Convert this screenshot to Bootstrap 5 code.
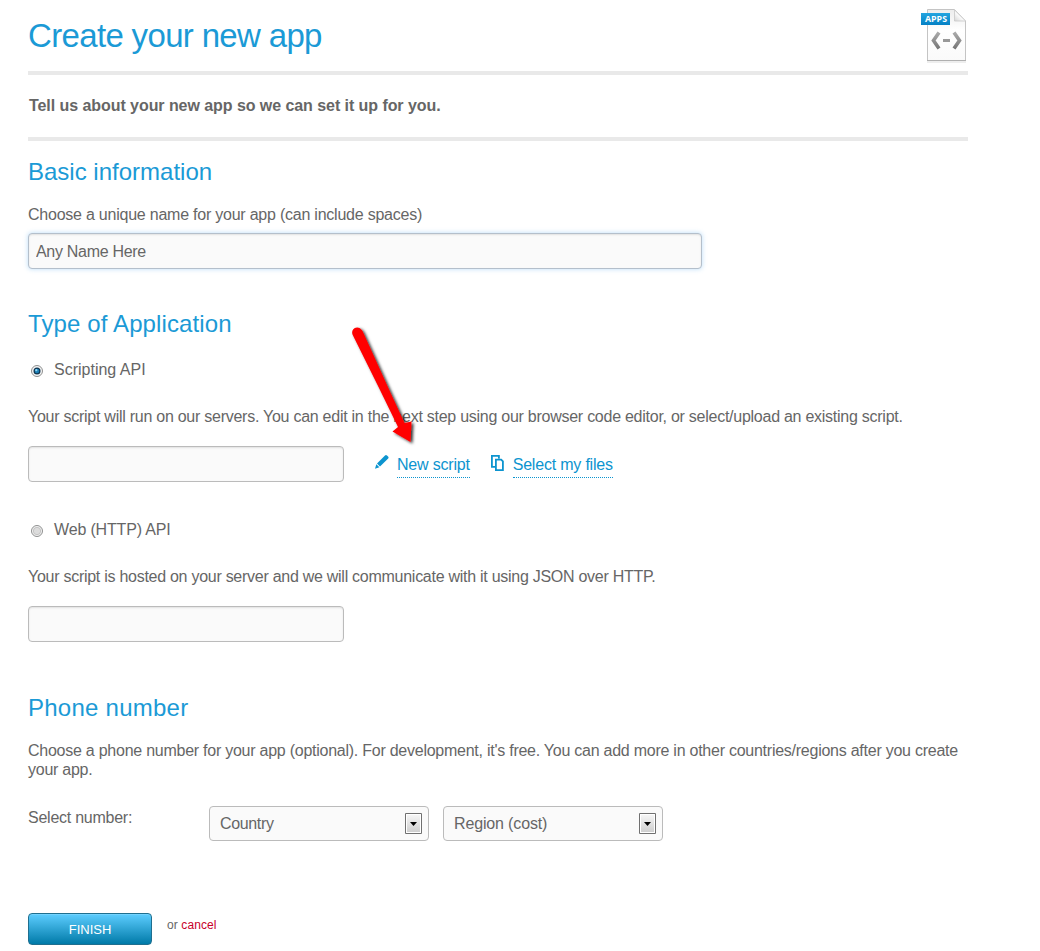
<!DOCTYPE html>
<html lang="en">
<head>
<meta charset="utf-8">
<title>Create your new app</title>
<link rel="stylesheet" href="https://cdn.jsdelivr.net/npm/bootstrap@5.3.0/dist/css/bootstrap.min.css">
<style>
body{font:16px/20px "Liberation Sans",Arial,sans-serif;color:#666;background:#fff;overflow:hidden}
.page{width:940px;margin-left:28px;padding-top:16px}
h1,h2{color:#1b9ad6;font-weight:400;margin:0;white-space:nowrap}
h1{font-size:33px;line-height:40px;letter-spacing:-.66px}
h2{font-size:24px;line-height:28px}
.head{height:55px}
.intro{border-top:4px solid #e9e9e9;border-bottom:4px solid #e9e9e9;height:70px;padding:21px 0 0 1px;font-weight:700;letter-spacing:-.06px}
.line{height:20px;white-space:nowrap}
.tight{letter-spacing:-.25px}
.form-control.field,.form-select.field{background-color:#fafafa;border:1px solid #bbb;border-radius:4px;color:#666;font-size:16px;line-height:20px;height:36px;padding:0 7px;box-shadow:inset 0 1px 2px rgba(0,0,0,.1)}
.form-control.field.active-field{width:674px;padding-top:2px;letter-spacing:-.3px;border-color:#b4bfcb;box-shadow:inset 0 1px 2px rgba(0,0,0,.1),0 0 5px rgba(82,168,236,.4)}
.form-control.short{width:316px}
.pick{position:relative;width:220px}
.form-select.field{height:35px;background-image:none;padding-left:10px;box-shadow:none}
.pick svg{position:absolute;right:7px;top:7px;pointer-events:none}
.action{color:#0c94cf;text-decoration:none;border-bottom:1px dotted #0c94cf;line-height:20px;height:23px;white-space:nowrap;letter-spacing:-.2px}
.action:hover{color:#0c94cf}
.arrow{position:absolute;left:345px;top:320px;pointer-events:none}
.radio-row{height:20px}
.radio-row svg{margin:5px 0 0 3px}
.radio-row label{margin-left:11px}
.btn.finish{width:124px;height:32px;border:1px solid #1f6f8f;border-radius:4px;padding:1px 0 0;font-size:13px;line-height:29px;color:#fff;background:linear-gradient(#5dcdff,#007aa8);box-shadow:inset 0 1px 0 rgba(255,255,255,.15)}
.or{font-size:12px;line-height:16px;margin:4px 0 0 15px;letter-spacing:.1px}
.or a{color:#c8002a;text-decoration:none}
</style>
</head>
<body>
<main class="page">
  <header class="head d-flex justify-content-between">
    <h1>Create your new app</h1>
    <svg width="52" height="60" viewBox="916 4 52 60" style="margin-top:-12px">
      <defs>
        <linearGradient id="pg" x2="0" y2="1"><stop stop-color="#ececec"/><stop offset=".4" stop-color="#fff"/><stop offset="1" stop-color="#fafafa"/></linearGradient>
        <linearGradient id="bl" x2="0" y2="1"><stop stop-color="#24a5e0"/><stop offset="1" stop-color="#0480c4"/></linearGradient>
        <linearGradient id="gr" x2="0" y2="1"><stop stop-color="#aaa"/><stop offset="1" stop-color="#777"/></linearGradient>
        <linearGradient id="fo" x1="0" y1="1" x2="1" y2="0"><stop stop-color="#d5d5d5"/><stop offset=".5" stop-color="#fff"/></linearGradient>
      </defs>
      <path d="M927 62H966" stroke="#ddd"/>
      <path d="M927.500 9.500H954.500L965.500 21V60.500H927.500Z" fill="url(#pg)" stroke="#c4c4c4"/>
      <path d="M927 60.500H966" stroke="#b0b0b0"/>
      <path d="M954.500 10V21H965.500Z" fill="url(#fo)" stroke="#c8c8c8" stroke-width=".8"/>
      <path d="M921 13H950V25H921Z" fill="url(#bl)"/>
      <text x="925" y="22" font-family="Open Sans" font-weight="700" font-size="9" fill="#fff" textLength="22" lengthAdjust="spacingAndGlyphs">APPS</text>
      <path d="M939 32.500L933.500 40.500L939 48.500" fill="none" stroke="url(#gr)" stroke-width="3.600"/>
      <path d="M954 32.500L959.500 40.500L954 48.500" fill="none" stroke="url(#gr)" stroke-width="3.600"/>
      <path d="M943 39H950V42H943Z" fill="#999"/>
    </svg>
  </header>
  <p class="intro mb-0">Tell us about your new app so we can set it up for you.</p>

  <section style="padding-top:17px">
    <h2>Basic information</h2>
    <label class="line d-block" for="name" style="margin-top:19px;letter-spacing:-.23px">Choose a unique name for your app (can include spaces)</label>
    <input id="name" class="form-control field active-field" style="margin-top:8px" value="Any Name Here">
  </section>

  <section style="padding-top:41px">
    <h2 style="letter-spacing:.12px">Type of Application</h2>
    <div class="radio-row d-flex align-items-start" style="margin-top:22px">
      <svg width="12" height="12" viewBox="0 0 12 12"><circle cx="6" cy="6" r="5.500" fill="#f4f4f4" stroke="#8e8f8f"/><circle cx="6" cy="6" r="3.500" fill="#10344f"/><circle cx="6" cy="6" r="2.300" fill="#1c7fb5"/><circle cx="5.300" cy="5.200" r="1.100" fill="#8ed6f5"/></svg>
      <label>Scripting API</label>
    </div>
    <p class="line mb-0" style="margin-top:27px;letter-spacing:-.258px">Your script will run on our servers. You can edit in the next step using our browser code editor, or select/upload an existing script.</p>
    <div class="d-flex align-items-start" style="margin-top:19px">
      <input class="form-control field short" aria-label="Script">
      <svg width="16" height="16" viewBox="0 0 16 16" style="margin:8px 0 0 30px" fill="#0c94cf"><path d="M11 1.400Q12 .6 13 1.500L14.300 2.800Q15 3.800 14.200 4.600L6 12.600L3 9.600Z M2.300 10.200L5.400 13.200L1 14.800Z"/></svg>
      <a class="action" href="#" style="margin:9px 0 0 7px">New script</a>
      <svg width="16" height="18" viewBox="0 0 16 18" style="margin:8px 0 0 20px" fill="none" stroke="#0c94cf" stroke-width="1.800"><path d="M5.500 12.900H1.900V1.900H8.900V4.500M5.900 5.600H11.200L12.900 7.300V16.100H5.900Z"/></svg>
      <a class="action" href="#" style="margin:9px 0 0 7px">Select my files</a>
    </div>
    <div class="radio-row d-flex align-items-start" style="margin-top:38px">
      <svg width="12" height="12" viewBox="0 0 12 12"><circle cx="6" cy="6" r="5.500" fill="#f4f4f4" stroke="#8e8f8f"/><circle cx="6" cy="6" r="3.700" fill="#dcdcdc" stroke="#bbb" stroke-width=".8"/></svg>
      <label style="letter-spacing:-.16px">Web (HTTP) API</label>
    </div>
    <p class="line mb-0" style="margin-top:27px;letter-spacing:-.27px">Your script is hosted on your server and we will communicate with it using JSON over HTTP.</p>
    <input class="form-control field short" style="margin-top:19px" aria-label="Script address">
  </section>

  <section style="padding-top:52px">
    <h2 style="letter-spacing:.25px">Phone number</h2>
    <p class="mb-0 tight text-nowrap" style="margin-top:19px;line-height:19px">Choose a phone number for your app (optional). For development, it's free. You can add more in other countries/regions after you create<br>your app.</p>
    <div class="d-flex align-items-start" style="margin-top:27px">
      <span class="tight" style="width:181px;padding-top:2px">Select number:</span>
      <div class="pick"><select class="form-select field" style="letter-spacing:-.35px" aria-label="Country"><option>Country</option></select>
        <svg width="17" height="21" viewBox="0 0 17 21"><defs><linearGradient id="dd" x2="0" y2="1"><stop stop-color="#f5f5f5"/><stop offset="1" stop-color="#cfcfcf"/></linearGradient></defs><path d="M.5.5H16.500V20.500H.5Z" fill="#fff" stroke="#707070"/><path d="M2 2H15V19H2Z" fill="url(#dd)"/><path d="M5 9H12L8.500 13Z"/></svg></div>
      <div class="pick" style="margin-left:14px"><select class="form-select field" style="letter-spacing:-.15px" aria-label="Region"><option>Region (cost)</option></select>
        <svg width="17" height="21" viewBox="0 0 17 21"><path d="M.5.5H16.500V20.500H.5Z" fill="#fff" stroke="#707070"/><path d="M2 2H15V19H2Z" fill="url(#dd)"/><path d="M5 9H12L8.500 13Z"/></svg></div>
    </div>
  </section>

  <div class="d-flex align-items-start" style="margin-top:72px">
    <button class="btn finish">FINISH</button>
    <span class="or">or <a href="#">cancel</a></span>
  </div>
</main>
<svg class="arrow" width="80" height="135" viewBox="345 320 80 135">
  <defs><filter id="sh" x="-30%" y="-20%" width="170%" height="150%"><feDropShadow dx="2" dy="1.500" stdDeviation="1.500" flood-color="#000" flood-opacity=".8"/></filter></defs>
  <path filter="url(#sh)" fill="#f00" d="M352.500 334.500C350.500 328 358.500 324.500 362.500 331L389 389.500L404.500 423L411.500 421.500L410.500 442L392.500 431.500L398 427L380 390Z"/>
</svg>
<script src="https://cdn.jsdelivr.net/npm/bootstrap@5.3.0/dist/js/bootstrap.bundle.min.js"></script>
</body>
</html>
